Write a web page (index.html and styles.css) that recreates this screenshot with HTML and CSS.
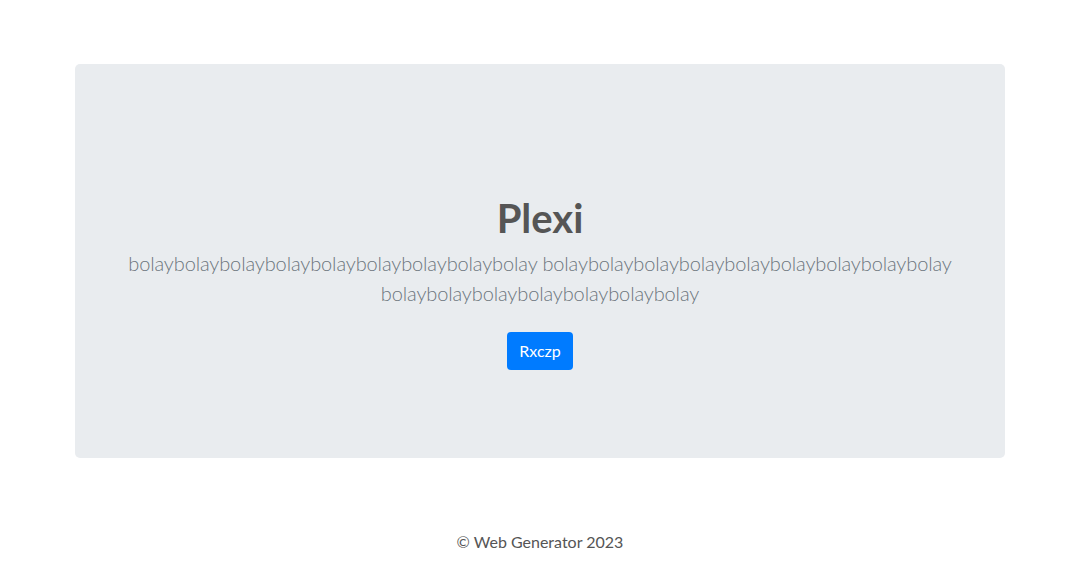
FILE: index.html
```html
<!DOCTYPE html>
<html lang="en">
<head>
<meta charset="utf-8">
<title>Plexi</title>
<link rel="stylesheet" href="styles.css">
</head>
<body>
<main class="container">
  <section class="jumbotron">
    <h1 class="title">Plexi</h1>
    <p class="lead">bolaybolaybolaybolaybolaybolaybolaybolaybolay bolaybolaybolaybolaybolaybolaybolaybolaybolay bolaybolaybolaybolaybolaybolaybolay</p>
    <a class="btn" href="#">Rxczp</a>
  </section>
</main>
<footer class="footer">© Web Generator 2023</footer>
</body>
</html>
```
FILE: styles.css
```css
* { box-sizing: border-box; }
html, body { margin: 0; padding: 0; }
body {
  font-family: Lato, "Open Sans", "Noto Sans", sans-serif;
  font-size: 16px;
  line-height: 1.5;
  color: #212529;
  background: #fff;
}
.container {
  width: 930px;
  margin: 64px auto 0;
}
.jumbotron {
  background: #e9ecef;
  border-radius: 5px;
  padding: 130px 32px 88px;
  text-align: center;
  display: flex;
  flex-direction: column;
  align-items: center;
}
.title {
  margin: 0 0 8px;
  font-size: 40px;
  line-height: 48px;
  font-weight: 700;
  color: #555555;
}
.lead {
  margin: -2px 0 24px;
  font-size: 20px;
  line-height: 30px;
  font-weight: 300;
  letter-spacing: -0.13px;
  color: #6c757d;
}
.btn {
  display: inline-block;
  height: 38px;
  padding: 6px 12px;
  font-size: 16px;
  line-height: 26px;
  color: #fff;
  background: #007bff;
  border-radius: 4px;
  text-decoration: none;
}
.footer {
  text-align: center;
  margin-top: 72px;
  line-height: 24px;
  color: #555555;
}
```
